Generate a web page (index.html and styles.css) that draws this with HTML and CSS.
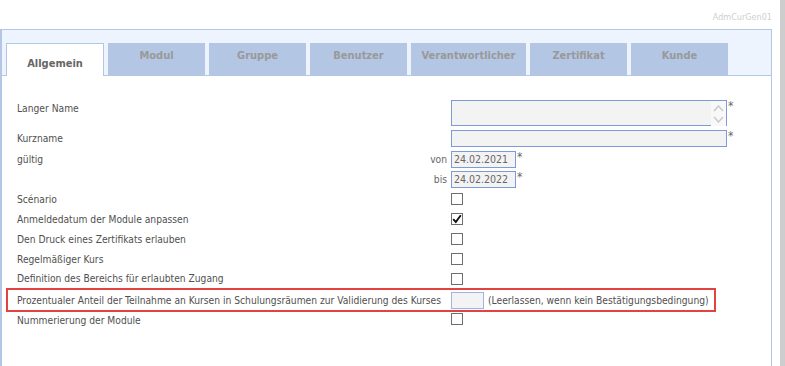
FILE: index.html
```html
<!DOCTYPE html>
<html lang="de">
<head>
<meta charset="utf-8">
<title>AdmCurGen01</title>
<link rel="stylesheet" href="styles.css">
</head>
<body>
<div class="page">
  <div class="main">
    <div class="code">AdmCurGen01</div>
    <div class="panel">
      <div class="tabbar">
        <div class="tab active">Allgemein</div>
        <div class="tab">Modul</div>
        <div class="tab">Gruppe</div>
        <div class="tab">Benutzer</div>
        <div class="tab wide">Verantwortlicher</div>
        <div class="tab">Zertifikat</div>
        <div class="tab">Kunde</div>
      </div>
      <div class="content">
        <div class="row r1">
          <div class="lbl">Langer Name</div>
          <div class="field">
            <div class="box area">
              <div class="sb">
                <svg width="15" height="25" viewBox="0 0 15 25"><path d="M3 10 L7.5 5 L12 10" fill="none" stroke="#c9c9c9" stroke-width="1.5"/><path d="M3 16 L7.5 21 L12 16" fill="none" stroke="#c9c9c9" stroke-width="1.5"/></svg>
              </div>
            </div>
            <span class="star">*</span>
          </div>
        </div>
        <div class="row r2">
          <div class="lbl">Kurzname</div>
          <div class="field">
            <div class="box txt"></div>
            <span class="star">*</span>
          </div>
        </div>
        <div class="row">
          <div class="lbl"><span>gültig</span><span class="sub">von</span></div>
          <div class="field">
            <div class="box date">24.02.2021</div>
            <span class="star">*</span>
          </div>
        </div>
        <div class="row">
          <div class="lbl"><span></span><span class="sub">bis</span></div>
          <div class="field">
            <div class="box date">24.02.2022</div>
            <span class="star">*</span>
          </div>
        </div>
        <div class="row">
          <div class="lbl">Scénario</div>
          <span class="cb"></span>
        </div>
        <div class="row">
          <div class="lbl">Anmeldedatum der Module anpassen</div>
          <span class="cb"><svg width="10" height="10" viewBox="0 0 10 10"><path d="M1.2 5.2 L3.8 8 L8.8 1.2" fill="none" stroke="#111" stroke-width="1.9"/></svg></span>
        </div>
        <div class="row">
          <div class="lbl">Den Druck eines Zertifikats erlauben</div>
          <span class="cb"></span>
        </div>
        <div class="row">
          <div class="lbl">Regelmäßiger Kurs</div>
          <span class="cb"></span>
        </div>
        <div class="row r9">
          <div class="lbl">Definition des Bereichs für erlaubten Zugang</div>
          <span class="cb"></span>
        </div>
        <div class="row hl">
          <div class="lbl">Prozentualer Anteil der Teilnahme an Kursen in Schulungsräumen zur Validierung des Kurses</div>
          <div class="box pct"></div>
          <span class="note">(Leerlassen, wenn kein Bestätigungsbedingung)</span>
        </div>
        <div class="row top">
          <div class="lbl">Nummerierung der Module</div>
          <span class="cb"></span>
        </div>
      </div>
    </div>
  </div>
  <div class="vscroll"></div>
</div>
</body>
</html>
```
FILE: styles.css
```css
* { box-sizing: border-box; }

body {
  margin: 0;
  font-family: "DejaVu Sans Condensed", "DejaVu Sans", sans-serif;
  font-size: 10.2px;
  color: #505050;
  background: #fff;
  overflow: hidden;
}

.page {
  display: flex;
  height: 366px;
}

.main {
  width: 772px;
  display: flex;
  flex-direction: column;
}

.vscroll {
  width: 5px;
  margin-left: 8px;
  background: #cdcdcd;
}

.code {
  height: 29px;
  padding-top: 12px;
  line-height: 11px;
  font-size: 9px;
  color: #cfcfcf;
  text-align: right;
}

.panel {
  flex: 1;
  border: 1px solid #b3c6e4;
  border-left-width: 2px;
  border-bottom: none;
}

.tabbar {
  height: 46px;
  background: #eef4fd;
  border-bottom: 1px solid #b3c6e4;
  padding: 13px 0 0 4px;
  display: flex;
  gap: 4px;
  align-items: flex-start;
}

.tab {
  width: 97px;
  height: 32px;
  background: #b3c6e4;
  color: #999;
  font-weight: bold;
  font-size: 11px;
  line-height: 13px;
  text-align: center;
  padding-top: 6px;
}

.tab.wide { width: 115px; }

.tab.active {
  width: 98px;
  height: 33px;
  background: #fff;
  border: 1px solid #b3c6e4;
  border-bottom: none;
  color: #666;
  padding-top: 13px;
}

.content {
  padding: 23px 0 0 15px;
}

.row {
  display: flex;
  align-items: center;
  height: 20px;
}

.lbl {
  width: 434px;
  flex: none;
  line-height: 13px;
  padding-right: 4px;
  display: flex;
  justify-content: space-between;
}

.sub { color: #666; }

.r1 { height: 29px; align-items: flex-start; }
.r1 .lbl { padding-top: 3px; }
.r1 .field { margin-top: 1px; }
.r2 { height: 21px; }
.r9 { height: 19px; }

.field {
  display: flex;
  align-items: flex-start;
}

.box {
  border: 1px solid #7f9ad9;
  background: #f3f3f3;
}

.area {
  width: 276px;
  height: 26px;
  position: relative;
}

.sb {
  position: absolute;
  right: 0;
  top: 0;
  bottom: -1px;
  width: 15px;
  background: #f8f8f8;
}

.sb svg { display: block; }

.txt {
  width: 276px;
  height: 17px;
}

.date {
  width: 65px;
  height: 17px;
  font-size: 10.5px;
  line-height: 15px;
  color: #666;
  padding-left: 2px;
}

.star {
  font-size: 12px;
  line-height: 12px;
  color: #666;
  margin-left: 1px;
}

.cb {
  width: 12px;
  height: 12px;
  border: 1px solid #6f6f6f;
  background: #fff;
  display: flex;
  align-items: center;
  justify-content: center;
}

.cb svg { display: block; }

.hl {
  height: 24px;
  width: 710px;
  margin-left: -11px;
  padding-left: 9px;
  border: 2px solid #e2433f;
}

.pct {
  width: 33px;
  height: 17px;
  border-color: #9fb3e6;
}

.note { margin-left: 4px; }

.row.top { align-items: flex-start; }
.row.top .cb { margin-top: 1px; }
.row.top .lbl { padding-top: 2px; }
```
